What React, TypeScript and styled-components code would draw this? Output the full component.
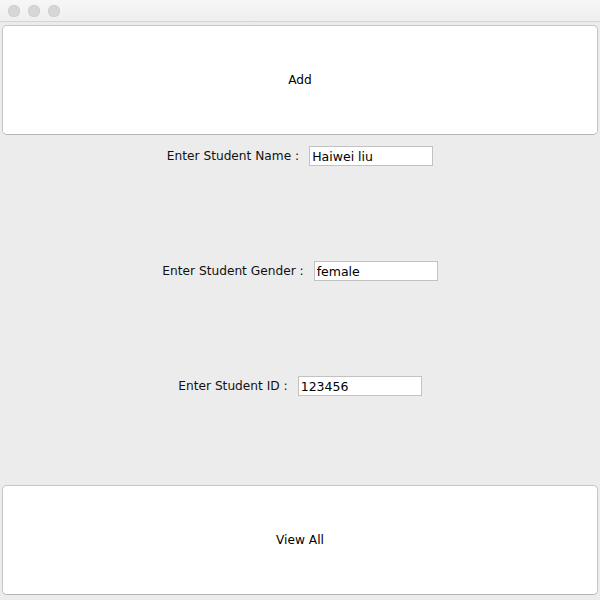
import React from "react";
import styled, { createGlobalStyle } from "styled-components";

const GlobalStyle = createGlobalStyle`
  html, body {
    margin: 0;
    padding: 0;
    background: #ececec;
  }
  body {
    font-family: "DejaVu Sans", "Liberation Sans", sans-serif;
    font-size: 12px;
    color: #111;
  }
`;

const Window = styled.div`
  width: 600px;
  height: 600px;
  display: flex;
  flex-direction: column;
  background: #ececec;
  overflow: hidden;
`;

const TitleBar = styled.div`
  height: 21px;
  flex-shrink: 0;
  display: flex;
  align-items: center;
  gap: 8px;
  padding-left: 8px;
  background: linear-gradient(#f6f6f6, #efefef);
  border-bottom: 1px solid #d4d4d4;
`;

const Light = styled.span`
  width: 12px;
  height: 12px;
  border-radius: 50%;
  background: #d6d6d6;
  box-shadow: inset 0 0 0 0.5px #c8c8c8;
`;

const Grid = styled.div`
  flex: 1;
  display: grid;
  grid-template-rows: repeat(5, 115px);
`;

const Button = styled.button`
  margin: 3px 2px 2px;
  background: #ffffff;
  border: 1px solid #c6c6c6;
  border-bottom-color: #b4b4b4;
  border-radius: 5px;
  font-family: "DejaVu Sans", "Liberation Sans", sans-serif;
  font-size: 12.2px;
  color: #000;
  cursor: pointer;
`;

const FieldRow = styled.div`
  display: flex;
  justify-content: center;
  align-items: flex-start;
  gap: 10px;
  padding-top: 9px;
`;

const Label = styled.label`
  font-size: 12.2px;
  line-height: 21px;
  white-space: nowrap;
`;

const Field = styled.input`
  box-sizing: border-box;
  width: 124px;
  height: 20px;
  margin: 0;
  padding: 0 2px;
  border: 1px solid #c2c2c2;
  background: #fff;
  font-family: "DejaVu Sans", "Liberation Sans", sans-serif;
  font-size: 12.5px;
  color: #000;
  outline: none;
`;

const rows = [
  { label: "Enter Student Name :", value: "Haiwei liu" },
  { label: "Enter Student Gender :", value: "female" },
  { label: "Enter Student ID :", value: "123456" },
];

export default function App() {
  return (
    <Window>
      <GlobalStyle />
      <TitleBar>
        <Light />
        <Light />
        <Light />
      </TitleBar>
      <Grid>
        <Button>Add</Button>
        {rows.map((r) => (
          <FieldRow key={r.label}>
            <Label>{r.label}</Label>
            <Field defaultValue={r.value} />
          </FieldRow>
        ))}
        <Button>View All</Button>
      </Grid>
    </Window>
  );
}
